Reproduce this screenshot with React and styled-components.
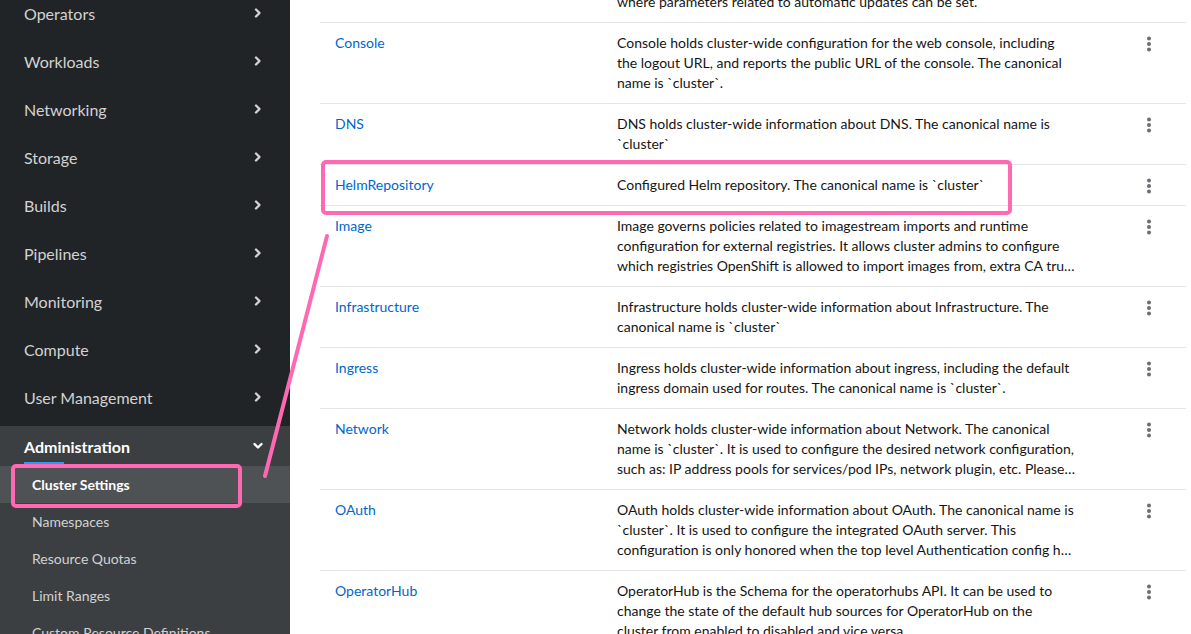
import React from 'react'
import styled, { createGlobalStyle } from 'styled-components'

const GlobalStyle = createGlobalStyle`
  html, body { margin: 0; padding: 0; }
  body {
    font-family: Lato, "Liberation Sans", sans-serif;
    background: #fff;
    overflow: hidden;
  }
`

const navItems = [
  'Operators', 'Workloads', 'Networking', 'Storage', 'Builds',
  'Pipelines', 'Monitoring', 'Compute', 'User Management',
]

const adminItems = [
  'Cluster Settings', 'Namespaces', 'Resource Quotas', 'Limit Ranges',
  'Custom Resource Definitions',
]

const rows = [
  { name: 'ClusterVersion', desc: 'ClusterVersion is the configuration for the ClusterVersionOperator. This is where parameters related to automatic updates can be set.' },
  { name: 'Console', desc: 'Console holds cluster-wide configuration for the web console, including the logout URL, and reports the public URL of the console. The canonical name is `cluster`.' },
  { name: 'DNS', desc: 'DNS holds cluster-wide information about DNS. The canonical name is `cluster`' },
  { name: 'HelmRepository', desc: 'Configured Helm repository. The canonical name is `cluster`' },
  { name: 'Image', desc: 'Image governs policies related to imagestream imports and runtime configuration for external registries. It allows cluster admins to configure which registries OpenShift is allowed to import images from, extra CA trust bundles for external registries, and policies to block or allow registry hostnames.' },
  { name: 'Infrastructure', desc: 'Infrastructure holds cluster-wide information about Infrastructure. The canonical name is `cluster`' },
  { name: 'Ingress', desc: 'Ingress holds cluster-wide information about ingress, including the default ingress domain used for routes. The canonical name is `cluster`.' },
  { name: 'Network', desc: 'Network holds cluster-wide information about Network. The canonical name is `cluster`. It is used to configure the desired network configuration, such as: IP address pools for services/pod IPs, network plugin, etc. Please view network.spec for an explanation on what applies when configuring this resource.' },
  { name: 'OAuth', desc: 'OAuth holds cluster-wide information about OAuth. The canonical name is `cluster`. It is used to configure the integrated OAuth server. This configuration is only honored when the top level Authentication config has type set to IntegratedOAuth.' },
  { name: 'OperatorHub', desc: 'OperatorHub is the Schema for the operatorhubs API. It can be used to change the state of the default hub sources for OperatorHub on the cluster from enabled to disabled and vice versa.' },
]

const Page = styled.div`
  display: flex;
  height: 634px;
  overflow: hidden;
  position: relative;
`

const Sidebar = styled.nav`
  width: 290px;
  flex: none;
  background: #212427;
  overflow: hidden;
`

const NavList = styled.div`
  margin-top: -11px;
  display: flex;
  flex-direction: column;
`

const NavItem = styled.div`
  height: 48px;
  display: flex;
  align-items: center;
  justify-content: space-between;
  padding: 0 26px 0 24px;
  font-size: 16px;
  color: ${p => (p.$active ? '#fff' : '#d2d2d2')};
  font-weight: ${p => (p.$active ? 700 : 400)};
`

const Section = styled.div`
  margin-top: 5px;
  background: #3c3f42;
`

const SectionHeader = styled(NavItem)`
  height: 40px;
`

const SectionTitle = styled.span`
  position: relative;
  &::after {
    content: '';
    position: absolute;
    left: 0;
    bottom: -9px;
    width: 40px;
    height: 3px;
    background: #2b9af3;
  }
`

const SubItem = styled.div`
  height: 37px;
  display: flex;
  align-items: center;
  padding-left: 32px;
  font-size: 14px;
  color: ${p => (p.$active ? '#fff' : '#d2d2d2')};
  font-weight: ${p => (p.$active ? 700 : 400)};
  background: ${p => (p.$active ? '#4f5255' : 'transparent')};
`

const Main = styled.main`
  flex: 1;
  background: #fff;
  padding: 0 5px 0 30px;
  overflow: hidden;
`

const Table = styled.div`
  margin-top: -38px;
`

const Row = styled.div`
  display: grid;
  grid-template-columns: 282px 1fr 74px;
  border-bottom: 1px solid #e6e6e6;
  font-size: 14px;
  line-height: 20px;
  color: #151515;
`

const NameCell = styled.div`
  padding: 10px 0 10px 15px;
`

const Link = styled.a`
  color: #0066cc;
  text-decoration: none;
`

const DescCell = styled.div`
  padding: 10px 36px 10px 15px;
`

const Clamp = styled.div`
  display: -webkit-box;
  -webkit-line-clamp: 3;
  -webkit-box-orient: vertical;
  overflow: hidden;
`

const KebabCell = styled.div`
  display: flex;
  justify-content: center;
  padding-top: 13px;
`

const Overlay = styled.svg`
  position: absolute;
  left: 0;
  top: 0;
  pointer-events: none;
`

const Chevron = ({ down, color }) => (
  <svg width="12" height="12" viewBox="0 0 12 12">
    <polyline
      points={down ? '2.5,4 6,7.5 9.5,4' : '4,2.5 7.5,6 4,9.5'}
      fill="none"
      stroke={color}
      strokeWidth="2.4"
      strokeLinecap="round"
      strokeLinejoin="round"
    />
  </svg>
)

const Kebab = () => (
  <svg width="6" height="16" viewBox="0 0 6 16">
    <circle cx="3" cy="2.5" r="2" fill="#6a6e73" />
    <circle cx="3" cy="8" r="2" fill="#6a6e73" />
    <circle cx="3" cy="13.5" r="2" fill="#6a6e73" />
  </svg>
)

export default function App() {
  return (
    <Page>
      <GlobalStyle />
      <Sidebar>
        <NavList>
          {navItems.map(item => (
            <NavItem key={item}>
              <span>{item}</span>
              <Chevron color="#d2d2d2" />
            </NavItem>
          ))}
          <Section>
            <SectionHeader $active>
              <SectionTitle>Administration</SectionTitle>
              <Chevron down color="#fff" />
            </SectionHeader>
            {adminItems.map((item, i) => (
              <SubItem key={item} $active={i === 0}>{item}</SubItem>
            ))}
          </Section>
        </NavList>
      </Sidebar>
      <Main>
        <Table>
          {rows.map(r => (
            <Row key={r.name}>
              <NameCell><Link href="#">{r.name}</Link></NameCell>
              <DescCell><Clamp>{r.desc}</Clamp></DescCell>
              <KebabCell><Kebab /></KebabCell>
            </Row>
          ))}
        </Table>
      </Main>
      <Overlay width="1191" height="634">
        <g fill="none" stroke="#ff69b4" strokeWidth="4">
          <rect x="323" y="162" width="687" height="51" rx="3" />
          <rect x="13" y="466" width="227" height="40" rx="3" />
          <line x1="265" y1="476" x2="327" y2="236" strokeLinecap="round" />
        </g>
      </Overlay>
    </Page>
  )
}
